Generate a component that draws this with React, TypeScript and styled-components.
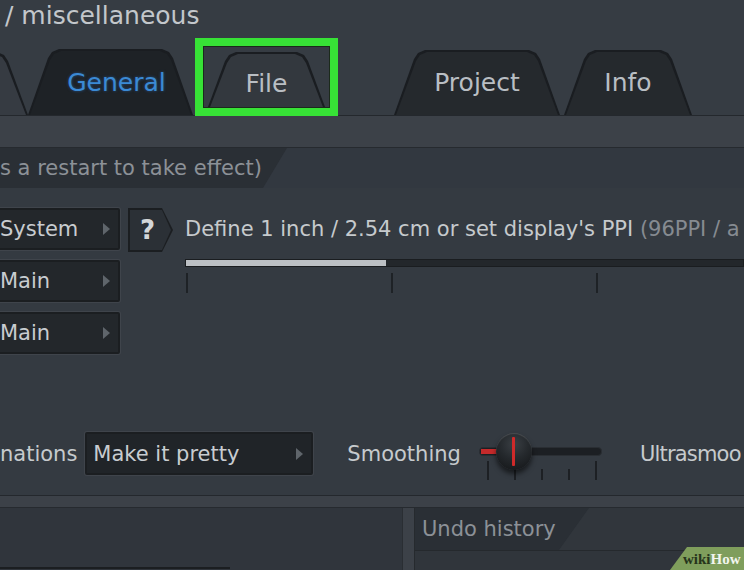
import React from "react";
import styled, { createGlobalStyle } from "styled-components";

const Global = createGlobalStyle`
  html, body { margin: 0; padding: 0; background: #353b42; }
  body { font-family: "DejaVu Sans", "Liberation Sans", sans-serif; }
  * { box-sizing: border-box; }
`;

const Screen = styled.div`
  position: relative;
  width: 744px;
  height: 570px;
  overflow: hidden;
  background: #343a41;
  color: #c6cacd;
  font-size: 21px;
  display: flex;
  flex-direction: column;
`;

/* ---------- header + tabs ---------- */
const Header = styled.header`
  flex: none;
  height: 115px;
  background: #363c43;
  display: flex;
  flex-direction: column;
`;

const Title = styled.div`
  height: 32px;
  line-height: 32px;
  padding-left: 5px;
  font-size: 25px;
  color: #c3c7cb;
  white-space: nowrap;
`;

const TabRow = styled.nav`
  flex: 1;
  display: flex;
  align-items: flex-end;
  margin-left: -122px;
`;

const shape = `polygon(0 100%, 20px 9px, 24px 3px, 31px 0, calc(100% - 31px) 0, calc(100% - 24px) 3px, calc(100% - 20px) 9px, 100% 100%)`;

const TabSlot = styled.div<{ $ml: number }>`
  position: relative;
  flex: none;
  margin-left: ${(p) => p.$ml}px;
`;

const Tab = styled.div<{ $w: number; $h: number; $fill: string; $shift?: number }>`
  position: relative;
  width: ${(p) => p.$w}px;
  height: ${(p) => p.$h}px;
  background: #1a1d21;
  clip-path: ${shape};
  display: flex;
  align-items: center;
  justify-content: center;
  padding-left: ${(p) => p.$shift ?? 0}px;
  &::before {
    content: "";
    position: absolute;
    inset: 2px 2px 0 2px;
    background: ${(p) => p.$fill};
    clip-path: ${shape};
  }
`;

const TabLabel = styled.span<{ $active?: boolean }>`
  position: relative;
  z-index: 1;
  font-size: 25px;
  color: ${(p) => (p.$active ? "#3b8ad4" : "#b9bec3")};
  text-shadow: ${(p) => (p.$active ? "0 0 3px rgba(40,110,200,0.6)" : "none")};
  white-space: nowrap;
`;

const Highlight = styled.div`
  position: absolute;
  left: -10px;
  right: -10px;
  top: -14px;
  bottom: -1px;
  border: 8px solid #37e236;
  box-shadow: inset 0 0 0 1px #1b2a1b;
  z-index: 3;
  pointer-events: none;
`;

const Strip = styled.div<{ $h: number }>`
  flex: none;
  height: ${(p) => p.$h}px;
  background: #3c4148;
  border-top: 1px solid #24282d;
  border-bottom: 1px solid #262a2f;
`;

/* ---------- section bar ---------- */
const SectionBar = styled.div`
  flex: none;
  height: 40px;
  background: #323840;
  display: flex;
`;

const SectionTab = styled.div<{ $w: number; $slant: number; $pad: number }>`
  width: ${(p) => p.$w}px;
  height: 100%;
  background: #2a2f35;
  clip-path: polygon(0 0, 100% 0, calc(100% - ${(p) => p.$slant}px) 100%, 0 100%);
  display: flex;
  align-items: center;
  padding-left: ${(p) => p.$pad}px;
  color: #8c9197;
  white-space: nowrap;
`;

/* ---------- content ---------- */
const Content = styled.main`
  flex: none;
  height: 307px;
  padding-top: 20px;
  background: #343a41;
  display: flex;
  flex-direction: column;
`;

const SettingsGrid = styled.div`
  display: flex;
  align-items: flex-start;
`;

const ButtonCol = styled.div`
  flex: none;
  width: 130px;
  margin-left: -10px;
  display: flex;
  flex-direction: column;
  gap: 10px;
`;

const Arrow = styled.span`
  flex: none;
  width: 0;
  height: 0;
  border-left: 7px solid #5f656b;
  border-top: 6px solid transparent;
  border-bottom: 6px solid transparent;
`;

const SelectButton = styled.div<{ $w: number }>`
  flex: none;
  width: ${(p) => p.$w}px;
  height: 42px;
  background: #23272b;
  border: 2px solid #1b1e21;
  box-shadow: 0 0 0 1px #3f444b;
  border-radius: 2px;
  display: flex;
  align-items: center;
  justify-content: space-between;
  padding: 0 8px 0 8px;
  color: #c8ccd0;
  white-space: nowrap;
`;

const HelpBox = styled.div`
  flex: none;
  margin-left: 8px;
  width: 45px;
  height: 44px;
  background: #1b1e21;
  clip-path: polygon(0 0, 34px 0, 100% 50%, 34px 100%, 0 100%);
  position: relative;
  display: flex;
  align-items: center;
  padding-left: 12px;
  &::before {
    content: "";
    position: absolute;
    inset: 2px;
    background: #2b3036;
    clip-path: polygon(0 0, 32px 0, 100% 50%, 32px 100%, 0 100%);
  }
`;

const HelpMark = styled.span`
  position: relative;
  font-size: 26px;
  font-weight: bold;
  color: #d3d6d9;
`;

const RightCol = styled.div`
  flex: 1;
  min-width: 0;
  margin-left: 12px;
  display: flex;
  flex-direction: column;
`;

const DefineText = styled.div`
  height: 42px;
  line-height: 42px;
  white-space: nowrap;
  color: #c6cacd;
`;

const Dim = styled.span`
  color: #868b91;
`;

const Bar = styled.div`
  margin-top: 9px;
  height: 8px;
  background: #23272b;
  border: 1px solid #1a1d20;
  display: flex;
`;

const BarFill = styled.div`
  height: 100%;
  background: #bcc0c4;
`;

const Ticks = styled.div`
  margin-top: 6px;
  height: 20px;
  display: flex;
  padding-left: 1px;
`;

const Tick = styled.div`
  flex: none;
  width: 205px;
  height: 100%;
  border-left: 2px solid #1e2226;
`;

/* ---------- animation row ---------- */
const OptionRow = styled.div`
  margin-top: 78px;
  height: 43px;
  display: flex;
  align-items: center;
  white-space: nowrap;
`;

const Label = styled.span<{ $ml?: number; $tight?: boolean }>`
  flex: none;
  margin-left: ${(p) => p.$ml ?? 0}px;
  letter-spacing: ${(p) => (p.$tight ? "-0.8px" : "normal")};
  color: #c6cacd;
`;

const Dropdown = styled(SelectButton)`
  margin-left: 8px;
  height: 43px;
  background: #202428;
  padding-left: 6px;
`;

const Slider = styled.div`
  position: relative;
  flex: none;
  margin-left: 18px;
  width: 123px;
  height: 43px;
`;

const Track = styled.div`
  position: absolute;
  left: 0;
  right: 0;
  top: 15px;
  height: 9px;
  border-radius: 4px;
  background: #1c1f23;
  border: 1px solid #2a2e33;
`;

const TrackFill = styled.div`
  position: absolute;
  left: 2px;
  top: 17px;
  width: 18px;
  height: 5px;
  background: #c52a2b;
`;

const SliderTicks = styled.div`
  position: absolute;
  left: 8px;
  width: 110px;
  top: 28px;
  height: 20px;
  display: flex;
  justify-content: space-between;
  align-items: flex-end;
`;

const SliderTick = styled.div<{ $h: number }>`
  width: 2px;
  height: ${(p) => p.$h}px;
  background: #1d2024;
`;

const Knob = styled.div`
  position: absolute;
  left: 17px;
  top: 1px;
  width: 36px;
  height: 37px;
  border-radius: 50%;
  background: radial-gradient(circle at 50% 30%, #3a3f44 0%, #25292d 45%, #121416 100%);
  box-shadow: 0 4px 5px rgba(0, 0, 0, 0.55), inset 0 1px 1px rgba(255, 255, 255, 0.15);
  display: flex;
  justify-content: center;
  align-items: center;
  &::after {
    content: "";
    width: 3px;
    height: 29px;
    background: #cf2a2a;
    border-radius: 1px;
  }
`;

/* ---------- bottom ---------- */
const Bottom = styled.section`
  flex: 1;
  display: flex;
  min-height: 0;
`;

const LeftPanel = styled.div`
  flex: none;
  width: 402px;
  background: #30353c;
  display: flex;
  flex-direction: column;
  justify-content: flex-end;
  padding-bottom: 1px;
`;

const PanelEdge = styled.div`
  width: 230px;
  height: 2px;
  background: #1b1e21;
`;

const Divider = styled.div`
  flex: none;
  width: 13px;
  background: #3c4148;
  border-left: 1px solid #2a2e33;
  border-right: 1px solid #262a2e;
`;

const RightPanel = styled.div`
  flex: 1;
  display: flex;
  flex-direction: column;
  background: #31363c;
`;

const PanelHead = styled.div`
  flex: none;
  height: 42px;
  display: flex;
`;

const PanelBody = styled.div`
  flex: 1;
  background: #30353b;
  border-top: 1px solid #25292d;
`;

const Watermark = styled.div`
  position: absolute;
  right: 0;
  bottom: 0;
  width: 74px;
  height: 23px;
  background: #7f9e5c;
  clip-path: polygon(17px 0, 100% 0, 100% 100%, 0 100%);
  padding-left: 13px;
  font-family: "Liberation Serif", "DejaVu Serif", serif;
  font-weight: bold;
  font-size: 15px;
  line-height: 25px;
  white-space: nowrap;
`;

const WikiDark = styled.span`
  color: #26341b;
`;
const WikiLight = styled.span`
  color: #f2f5ee;
`;

export default function App() {
  return (
    <>
      <Global />
      <Screen>
        <Header>
          <Title>/ miscellaneous</Title>
          <TabRow>
            <TabSlot $ml={0}>
              <Tab $w={150} $h={63} $fill="#363b42" />
            </TabSlot>
            <TabSlot $ml={0}>
              <Tab $w={165} $h={66} $fill="#1e2226" $shift={12}>
                <TabLabel $active>General</TabLabel>
              </Tab>
            </TabSlot>
            <TabSlot $ml={12}>
              <Tab $w={123} $h={63} $fill="#33383e">
                <TabLabel>File</TabLabel>
              </Tab>
              <Highlight />
            </TabSlot>
            <TabSlot $ml={66}>
              <Tab $w={166} $h={65} $fill="#25292d">
                <TabLabel>Project</TabLabel>
              </Tab>
            </TabSlot>
            <TabSlot $ml={4}>
              <Tab $w={128} $h={65} $fill="#25292d">
                <TabLabel>Info</TabLabel>
              </Tab>
            </TabSlot>
          </TabRow>
        </Header>

        <Strip $h={33} />

        <SectionBar>
          <SectionTab $w={287} $slant={24} $pad={0}>
            s a restart to take effect)
          </SectionTab>
        </SectionBar>

        <Content>
          <SettingsGrid>
            <ButtonCol>
              <SelectButton $w={130}>
                System <Arrow />
              </SelectButton>
              <SelectButton $w={130}>
                Main <Arrow />
              </SelectButton>
              <SelectButton $w={130}>
                Main <Arrow />
              </SelectButton>
            </ButtonCol>
            <HelpBox>
              <HelpMark>?</HelpMark>
            </HelpBox>
            <RightCol>
              <DefineText>
                Define 1 inch / 2.54 cm or set display's PPI <Dim>(96PPI / a</Dim>
              </DefineText>
              <Bar>
                <BarFill style={{ width: 200 }} />
              </Bar>
              <Ticks>
                <Tick />
                <Tick />
                <Tick />
              </Ticks>
            </RightCol>
          </SettingsGrid>

          <OptionRow>
            <Label>nations</Label>
            <Dropdown $w={228}>
              Make it pretty <Arrow />
            </Dropdown>
            <Label $ml={34}>Smoothing</Label>
            <Slider>
              <Track />
              <TrackFill />
              <SliderTicks>
                <SliderTick $h={19} />
                <SliderTick $h={12} />
                <SliderTick $h={11} />
                <SliderTick $h={11} />
                <SliderTick $h={19} />
              </SliderTicks>
              <Knob />
            </Slider>
            <Label $ml={38} $tight>
              Ultrasmoo
            </Label>
          </OptionRow>
        </Content>

        <Strip $h={13} />

        <Bottom>
          <LeftPanel>
            <PanelEdge />
          </LeftPanel>
          <Divider />
          <RightPanel>
            <PanelHead>
              <SectionTab $w={174} $slant={30} $pad={7}>
                Undo history
              </SectionTab>
            </PanelHead>
            <PanelBody />
          </RightPanel>
        </Bottom>

        <Watermark>
          <WikiDark>wiki</WikiDark>
          <WikiLight>How</WikiLight>
        </Watermark>
      </Screen>
    </>
  );
}
